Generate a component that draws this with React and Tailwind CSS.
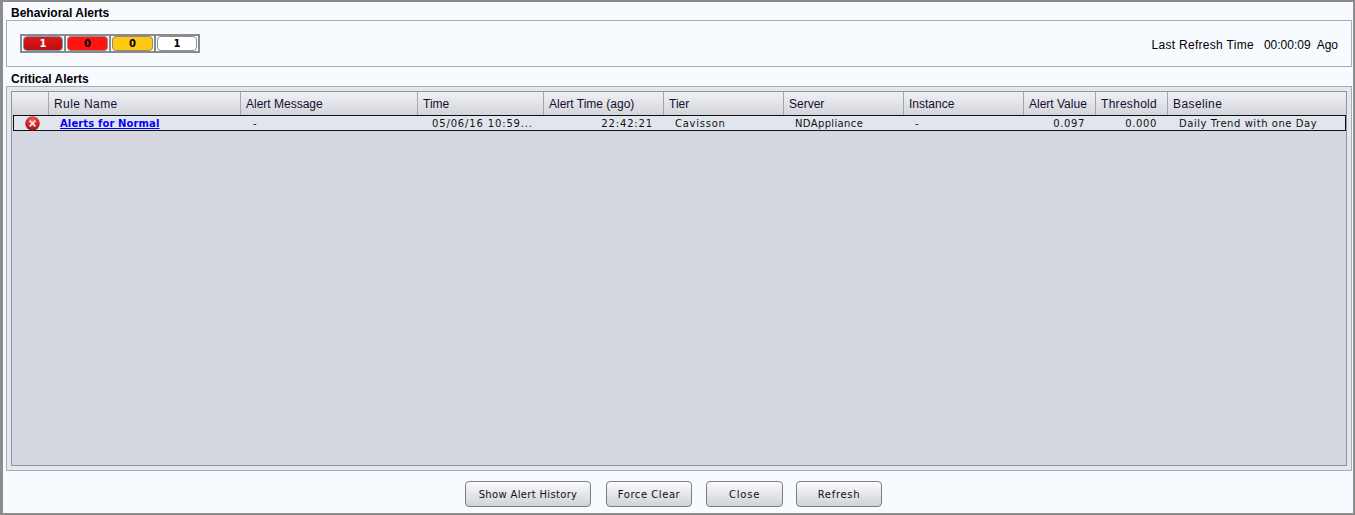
const columns = [
  { label: "", width: "w-[37px]" },
  { label: "Rule Name", width: "w-[192px]", extra: "tracking-[0.4px]" },
  { label: "Alert Message", width: "w-[177px]" },
  { label: "Time", width: "w-[126px]" },
  { label: "Alert Time (ago)", width: "w-[120px]" },
  { label: "Tier", width: "w-[120px]" },
  { label: "Server", width: "w-[120px]" },
  { label: "Instance", width: "w-[120px]" },
  { label: "Alert Value", width: "w-[72px]" },
  { label: "Threshold", width: "w-[72px]", extra: "tracking-[0.3px]" },
  { label: "Baseline", width: "flex-1", extra: "tracking-[0.4px]" },
];

const pills = [
  { count: 1, width: "w-[44px]", pill: "bg-gradient-to-b from-[#e01818] to-[#b80f0f] border-[#6f9cc4] text-white" },
  { count: 0, width: "w-[45px]", pill: "bg-[#ff1414] border-[#9a8a8a] text-black" },
  { count: 0, width: "w-[45px]", pill: "bg-[#ffc814] border-[#8f8a70] text-black" },
  { count: 1, width: "w-[42px]", pill: "bg-white border-[#8f8f8f] text-black" },
];

const buttons = [
  { label: "Show Alert History", width: "w-[126px]", extra: "tracking-[0.33px]" },
  { label: "Force Clear", width: "w-[86px] ml-px", extra: "tracking-[0.55px]" },
  { label: "Close", width: "w-[77px]", extra: "tracking-[0.8px]" },
  { label: "Refresh", width: "w-[86px] -ml-px", extra: "tracking-[0.7px]" },
];

function ErrorIcon() {
  return (
    <svg width="15" height="15" viewBox="0 0 15 15">
      <defs>
        <radialGradient id="errBall" cx="50%" cy="30%" r="75%">
          <stop offset="0%" stopColor="#f4686a" />
          <stop offset="55%" stopColor="#d02426" />
          <stop offset="100%" stopColor="#850f10" />
        </radialGradient>
      </defs>
      <circle cx="7.5" cy="7.5" r="7.2" fill="url(#errBall)" />
      <path d="M4.6 4.6l5.8 5.8M10.4 4.6l-5.8 5.8" stroke="#fbe4e4" strokeWidth="1.6" />
    </svg>
  );
}

export default function App() {
  return (
    <div className="h-[515px] w-full bg-[#f7faff] border-2 border-l-[3px] border-[#8c8c8c] pl-[3px] pr-px flex flex-col font-['Liberation_Sans',sans-serif] text-black overflow-hidden">
      <h2 className="h-[18px] pl-[5px] pt-[4px] text-[12px] leading-[14px] font-bold">Behavioral Alerts</h2>

      {/* top panel */}
      <div className="h-[47px] border border-[#a9acb0] flex items-center justify-between pl-[13px] pr-[13px]">
        <div className="flex border-2 border-[#8a8a8a] h-[19px]">
          {pills.map((p, i) => (
            <div key={i} className={`${p.width} ${i < 3 ? "border-r-2 border-r-[#8a8a8a]" : ""} flex items-center justify-center`}>
              <div className={`w-[calc(100%-2px)] h-[15px] rounded-[4px] border font-['DejaVu_Sans',sans-serif] font-bold text-[10px] leading-[13px] text-center ${p.pill}`}>
                {p.count}
              </div>
            </div>
          ))}
        </div>
        <div className="flex text-[12px] leading-[14px] mt-[2px]">
          <span className="tracking-[0.3px]">Last Refresh Time</span>
          <span className="ml-[10px]">00:00:09</span>
          <span className="ml-[6px]">Ago</span>
        </div>
      </div>

      <h2 className="h-[19px] pl-[5px] pt-[5px] text-[12px] leading-[14px] font-bold">Critical Alerts</h2>

      {/* grid panel */}
      <div className="h-[385px] border border-[#a9acb0] bg-[#e3e7ee] p-[4px]">
        <div className="h-full border border-[#8f939c] bg-[#d5d8e1] flex flex-col">
          <div className="h-[23px] shrink-0 flex bg-gradient-to-b from-[#f0f1f4] to-[#d3d5dc] text-[12px] leading-[25px] text-[#14102e]">
            {columns.map((c) => (
              <div key={c.label} className={`${c.width} ${c.extra ?? ""} pl-[5px] border-r border-[#a3a6ae] last:border-r-0 truncate`}>
                {c.label}
              </div>
            ))}
          </div>
          <div className="h-[16px] ml-px flex items-start border border-[#111] bg-[#e1e5ed] font-['DejaVu_Sans',sans-serif] text-[10px] leading-[16px] text-[#111]">
            <div className="w-[35px] flex justify-start pl-[11px]"><ErrorIcon /></div>
            <div className="w-[192px] pl-[11px]">
              <a href="#" className="font-bold text-[#0000ff] underline tracking-[0.12px]">Alerts for Normal</a>
            </div>
            <div className="w-[177px] pl-[12px]">-</div>
            <div className="w-[126px] pl-[14px] tracking-[0.85px] whitespace-nowrap">05/06/16 10:59...</div>
            <div className="w-[120px] pr-[11px] tracking-[0.85px] text-right">22:42:21</div>
            <div className="w-[120px] pl-[11px] tracking-[0.75px]">Cavisson</div>
            <div className="w-[120px] pl-[11px] tracking-[0.36px]">NDAppliance</div>
            <div className="w-[120px] pl-[11px]">-</div>
            <div className="w-[72px] pr-[11px] tracking-[0.6px] text-right">0.097</div>
            <div className="w-[72px] pr-[11px] tracking-[0.6px] text-right">0.000</div>
            <div className="flex-1 pl-[11px] tracking-[0.55px] whitespace-nowrap">Daily Trend with one Day</div>
          </div>
        </div>
      </div>

      {/* footer buttons */}
      <div className="flex-1 flex justify-center items-start gap-[14px] pt-[10px] pr-[11px]">
        {buttons.map((b) => (
          <button
            key={b.label}
            className={`${b.width} ${b.extra} h-[26px] rounded-[4px] border border-[#7b7d82] bg-gradient-to-b from-[#fbfbfc] to-[#cfd2d9] font-['DejaVu_Sans',sans-serif] text-[10px] text-[#111]`}
          >
            {b.label}
          </button>
        ))}
      </div>
    </div>
  );
}
